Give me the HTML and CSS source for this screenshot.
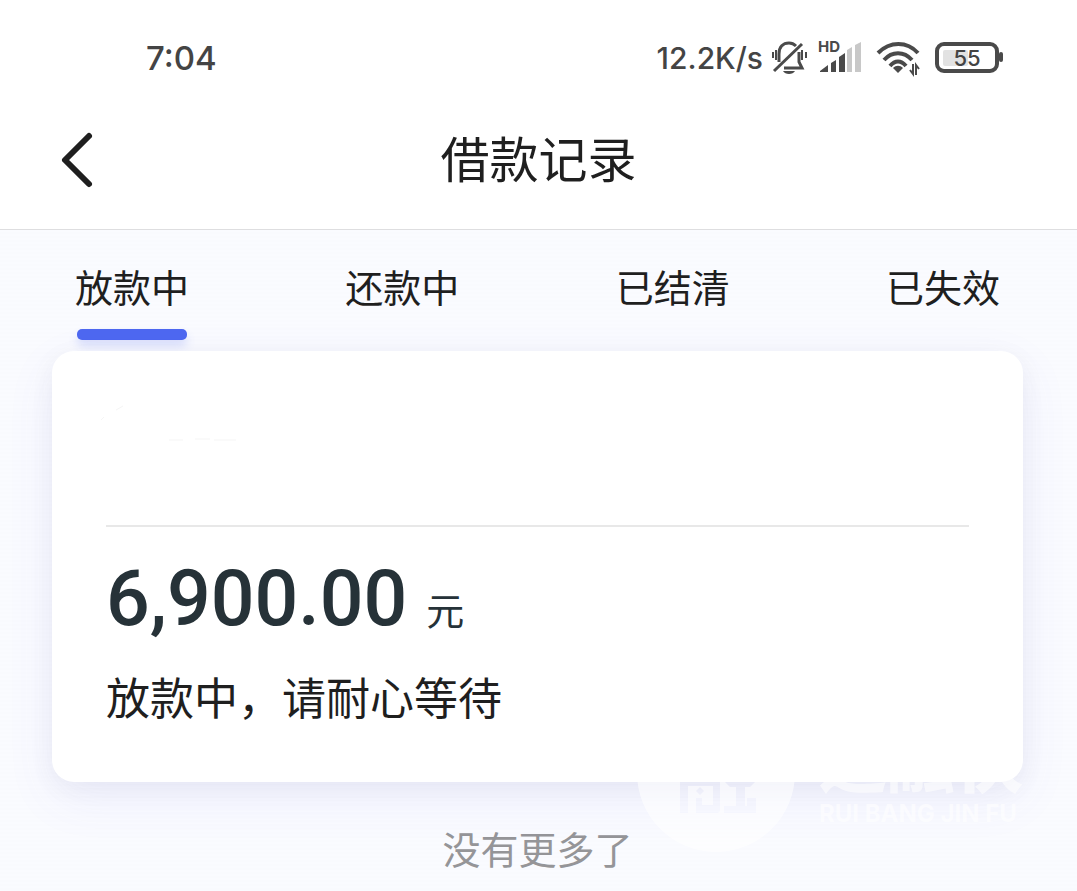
FILE: index.html
```
<!DOCTYPE html>
<html lang="zh-CN">

<head>
    <meta charset="UTF-8">
    <meta name="viewport" content="width=device-width, initial-scale=1.0">
    <title>借款记录</title>
    <link rel="stylesheet" href="styles.css">
</head>

<body>
    <div class="status-bar">
        <span class="time">7:04</span>
        <div class="status-icons">
            <span>12.2K/s</span>
            <svg class="icon-bell" width="36" height="36" viewBox="0 0 36 36" fill="none" stroke="#4a4a4a" stroke-width="3">
                <path d="M8 22V14C8 7 12 3 18 3C21 3 23 4 25 6M28 12V22L31 28H13" />
                <path d="M3 31L31 4" />
                <path d="M2 12V18M5 10V20M31 10V20M35 12V18" stroke-width="2" />
                <path d="M12 31H24C22 35 14 35 12 31Z" fill="#4a4a4a" stroke="none" />
            </svg>
            <svg class="icon-signal" width="42" height="36" viewBox="0 0 42 36">
                <text x="-1" y="12" class="hd">HD</text>
                <path d="M1 32V31L9 25V32ZM12 23L17 20V32H12ZM20 17L26 13V32H20Z" fill="#4a4a4a" />
                <path d="M28 10L33 7V32H28ZM36 5L42 2V32H36Z" fill="#c8c8c8" />
            </svg>
            <svg class="icon-wifi" width="44" height="36" viewBox="0 0 44 36" fill="none" stroke="#4a4a4a" stroke-width="4">
                <path d="M1 13C13 1 30 1 41 13M7 20C15 11 27 11 35 20M13 26C18 20 24 20 29 26" />
                <path d="M16 28C19 25 23 25 26 28L21 33Z" fill="#4a4a4a" stroke="none" />
                <path d="M36 24V34L33 30M39 35V25L42 29" stroke-width="2" />
            </svg>
            <svg class="icon-battery" width="70" height="32" viewBox="0 0 70 32">
                <rect x="2" y="2" width="60" height="27" rx="7" fill="none" stroke="#4a4a4a" stroke-width="4" />
                <rect x="8" y="8" width="25" height="16" rx="2" fill="#e2e2e2" />
                <rect x="64" y="10" width="4" height="10" rx="2" fill="#4a4a4a" />
                <text x="32" y="24" class="level">55</text>
            </svg>
        </div>
    </div>

    <header class="header">
        <a href="#" class="back" aria-label="返回">
            <svg width="32" height="56" viewBox="0 0 32 56" fill="none" stroke="#1f1f1f" stroke-width="6" stroke-linecap="round" stroke-linejoin="round">
                <path d="M29 4L5 28L29 52" />
            </svg>
        </a>
        <h1>借款记录</h1>
    </header>

    <main>
        <nav class="tabs">
            <a href="#" class="tab active">放款中</a>
            <a href="#" class="tab">还款中</a>
            <a href="#" class="tab">已结清</a>
            <a href="#" class="tab">已失效</a>
        </nav>

        <section class="card">
            <div class="card-head">
                <svg width="150" height="60" viewBox="0 0 150 60" fill="none" stroke="#f5f5f5">
                    <path d="M-5 29L-2 26M10 19L17 15M63 49H77M89 48H104M108 49H130" />
                </svg>
            </div>
            <p class="amount">6,900.00 <span class="unit">元</span></p>
            <p class="message">放款中，请耐心等待</p>

            <div class="watermark">
                <svg width="158" height="158" viewBox="0 0 158 158">
                    <path fill="#fff" fill-rule="evenodd" d="M79 0A79 79 0 0 1 79 158A79 79 0 0 1 79 0ZM43 80H83V117L81 119H59V104H65V111H76V92H51V119H43ZM63 93L67 97L63 101L59 97ZM88 80H118V88L113 93H108V112H110V104H119V119H87V112H99V93H93L88 88Z" />
                </svg>
                <div class="watermark-text">
                    <span class="watermark-name">速融快</span>
                    <span class="watermark-latin">RUI BANG JIN FU</span>
                </div>
            </div>
        </section>

        <p class="no-more">没有更多了</p>
    </main>
</body>

</html>
```
FILE: styles.css
```
body {
    margin: 0;
    min-height: 100vh;
    display: flex;
    flex-direction: column;
    background-color: #fff;
    color: #1f1f1f;
    font-family: "Noto Sans CJK SC", sans-serif;
}

h1,
p {
    margin: 0;
    font-weight: normal;
}

a {
    color: inherit;
    text-decoration: none;
}

svg {
    display: block;
    overflow: visible;
}

.status-bar {
    display: flex;
    justify-content: space-between;
    align-items: center;
    padding: 38px 72px 12px 146px;
    color: #444;
    font-family: Inter, sans-serif;
    font-size: 33px;
    font-weight: 500;
    line-height: 40px;
}

.status-icons {
    display: flex;
    align-items: center;
    font-size: 30px;
}

.icon-bell {
    margin-left: 8px;
}

.icon-signal {
    margin-left: 12px;
}

.icon-wifi {
    margin-left: 16px;
}

.icon-battery {
    margin-left: 14px;
}

.hd {
    font: bold 15px Inter, sans-serif;
    fill: #4a4a4a;
}

.level {
    font: 500 22px Inter, sans-serif;
    fill: #444;
    text-anchor: middle;
}

.header {
    display: grid;
    grid-template-columns: 120px 1fr 120px;
    align-items: center;
    height: 139px;
    border-bottom: 1px solid #dedee0;
}

.back {
    padding-left: 60px;
}

.header h1 {
    padding-bottom: 6px;
    font-size: 49px;
    line-height: 60px;
    text-align: center;
}

main {
    flex: 1;
    padding: 0 54px 0 52px;
    background: repeating-linear-gradient(#fafbff 0 2px, #f9fafe 2px 4px);
}

.tabs {
    display: flex;
    justify-content: space-between;
    height: 121px;
    padding: 0 23px;
}

.tab {
    padding-top: 28px;
    font-size: 38px;
    line-height: 56px;
}

.tab.active::after {
    content: "";
    display: block;
    height: 11px;
    margin: 15px 2px 0;
    border-radius: 5px;
    background-color: #4e68f0;
    box-shadow: 0 6px 10px rgba(78, 104, 240, 0.2);
}

.card {
    position: relative;
    padding: 0 54px 56px;
    border-radius: 22px;
    background-color: #fff;
    box-shadow: 0 16px 50px rgba(90, 90, 240, 0.08), 0 6px 24px rgba(60, 60, 60, 0.06);
}

.card-head {
    height: 174px;
    border-bottom: 2px solid #e8e8e8;
}

.card-head svg {
    padding-top: 40px;
}

.amount {
    padding-top: 26px;
    color: #263238;
    font-family: Roboto, "Noto Sans CJK SC", sans-serif;
    font-size: 77px;
    font-weight: 500;
    line-height: 92px;
}

.unit {
    font-size: 38px;
    font-weight: normal;
    line-height: 40px;
}

.message {
    padding-top: 21px;
    font-size: 44px;
    line-height: 60px;
}

.watermark {
    position: absolute;
    right: 0;
    bottom: -70px;
    display: flex;
    align-items: flex-end;
    gap: 24px;
    color: #fff;
    opacity: 0.6;
    pointer-events: none;
}

.watermark-text {
    display: flex;
    flex-direction: column;
    padding-bottom: 26px;
}

.watermark-name {
    font-size: 68px;
    font-weight: 900;
    line-height: 88px;
}

.watermark-latin {
    font-family: Inter, sans-serif;
    font-size: 24px;
    font-weight: bold;
    line-height: 24px;
}

.no-more {
    padding: 38px 0 14px;
    color: #959598;
    font-size: 38px;
    line-height: 56px;
    text-align: center;
}
```
